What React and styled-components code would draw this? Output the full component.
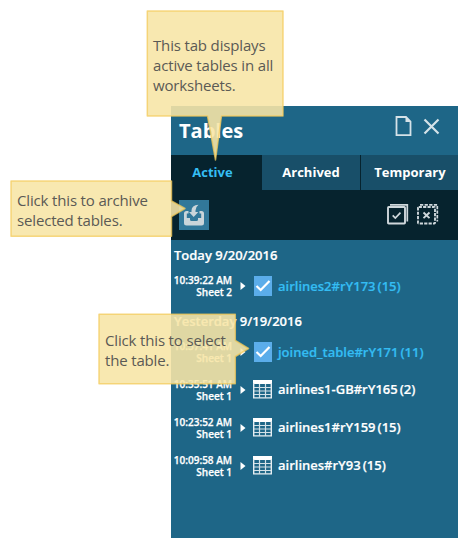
import React from "react";
import styled, { createGlobalStyle } from "styled-components";

const Global = createGlobalStyle`
  * { box-sizing: border-box; }
  body { margin: 0; background: #fff; font-family: "Open Sans", "Noto Sans", sans-serif; overflow: hidden; }
`;

const Page = styled.main`
  position: relative;
  width: 458px;
  height: 538px;
  padding: 106px 0 0 171px;
`;

const Panel = styled.section`
  height: 432px;
  background: #1e6687;
  color: #fff;
  display: flex;
  flex-direction: column;
`;

const Header = styled.header`
  height: 49px;
  padding: 0 18px 0 8px;
  display: flex;
  align-items: flex-start;
  justify-content: space-between;
`;

const Title = styled.h1`
  margin: 0;
  padding-top: 10px;
  font-size: 20px;
  line-height: 30px;
  font-weight: 700;
  color: #fff;
`;

const HeaderActions = styled.div`
  display: flex;
  gap: 11px;
  padding-top: 9px;
`;

const Tabs = styled.nav`
  height: 35px;
  display: grid;
  grid-template-columns: 91px 99px 97px;
  background: #06232e;
`;

const Tab = styled.button`
  border: 0;
  margin: 0;
  padding: 0 ${(p) => p.$padRight || 0}px 0 ${(p) => p.$padLeft || 0}px;
  font: 700 13px/35px "Open Sans", sans-serif;
  text-align: center;
  white-space: nowrap;
  color: ${(p) => (p.$active ? "#34bdf3" : "#fff")};
  background: ${(p) => (p.$active ? "#06232e" : "#184f69")};
  border-right: ${(p) => (p.$divided ? "1px solid #06232e" : "0")};
`;

const Toolbar = styled.div`
  height: 50px;
  padding: 10px 19px 0 8px;
  display: flex;
  justify-content: space-between;
  background: #06232e;
`;

const ArchiveButton = styled.button`
  width: 30px;
  height: 30px;
  border: 0;
  padding: 0;
  background: #32789a;
  display: grid;
  place-items: center;
`;

const SelectActions = styled.div`
  display: flex;
  gap: 8px;
  padding-top: 3px;
`;

const List = styled.div`
  margin-top: -1px;
`;

const DateHeading = styled.h2`
  margin: 0;
  height: 28px;
  padding: 3px 0 0 3px;
  font-size: 13px;
  line-height: 26px;
  font-weight: 600;
  -webkit-text-stroke: 0.2px currentColor;
`;

const Row = styled.div`
  height: 38px;
  display: grid;
  grid-template-columns: 61px 22px 24px 1fr;
  align-items: center;
`;

const Stamp = styled.div`
  font-size: 10px;
  line-height: 12px;
  font-weight: 600;
  text-align: right;
  white-space: nowrap;
  -webkit-text-stroke: 0.25px currentColor;
`;

const Arrow = styled.svg`
  margin-left: 8px;
  display: block;
`;

const Name = styled.div`
  display: flex;
  gap: 2px;
  padding-bottom: ${(p) => (p.$selected ? 0 : 2)}px;
  font-size: 13px;
  line-height: 20px;
  font-weight: 600;
  white-space: nowrap;
  color: ${(p) => (p.$selected ? "#34bdf3" : "#fff")};
  -webkit-text-stroke: 0.2px currentColor;
`;

const CheckBox = styled.span`
  width: 18px;
  height: 20px;
  background: #5badea;
  display: grid;
  place-items: center;
`;

const Grid = styled.svg`
  display: block;
  margin: 0 0 2px -1px;
`;

const Callout = styled.aside`
  position: absolute;
  left: ${(p) => p.$x}px;
  top: ${(p) => p.$y}px;
  width: ${(p) => p.$w}px;
  height: ${(p) => p.$h}px;
`;

const CalloutShape = styled.svg`
  position: absolute;
  inset: 0;
  overflow: visible;
`;

const CalloutText = styled.p`
  position: relative;
  margin: 0;
  padding: ${(p) => p.$top}px 0 0 6px;
  font-size: 15px;
  line-height: 20px;
  letter-spacing: -0.16px;
  color: #5b5a55;
  white-space: pre;
`;

const PageIcon = () => (
  <svg width="17" height="22" viewBox="0 0 17 22" fill="none" stroke="#d5e2e8" strokeWidth="1.8">
    <path d="M1.5 2H11L15.500 6.500V20.200H1.500Z" />
    <path d="M10.500 1.500V7H16Z" fill="#d5e2e8" stroke="none" />
  </svg>
);

const CloseIcon = () => (
  <svg width="17" height="22" viewBox="0 0 17 22" fill="none" stroke="#d5e2e8" strokeWidth="2.200">
    <path d="M1.500 4.500L15.500 18.500M15.500 4.500L1.500 18.500" />
  </svg>
);

const ArchiveIcon = () => (
  <svg width="22" height="22" viewBox="0 0 22 22" fill="#cbd5da">
    <path d="M5.500 7H3.500Q1 7 1 9.500V19Q1 21.500 3.500 21.500H18.500Q21 21.500 21 19V9.500Q21 7 18.500 7H16.500V9.500H18.200V14H15V15.500Q15 17 13.500 17H8.500Q7 17 7 15.500V14H3.800V9.500H5.500Z" />
    <path d="M15.500 .8Q8.500 1.500 8.500 6.500V8H6L10.700 13L15.300 8H12.500V6.500Q12.500 3 15.500 .8Z" />
  </svg>
);

const SelectAllIcon = () => (
  <svg width="22" height="22" viewBox="0 0 22 22" fill="none" stroke="#cfd8dc">
    <path d="M3 1.800H20.300V18.500" strokeWidth="1.700" />
    <rect x="1" y="4" width="17" height="16.500" rx=".7" strokeWidth="1.900" />
    <path d="M5.700 12.300L8.300 15L13.500 9.700" strokeWidth="1.700" />
  </svg>
);

const ClearAllIcon = () => (
  <svg width="22" height="22" viewBox="0 0 22 22" fill="none" stroke="#cfd8dc">
    <path d="M3 1.800H20.300V18.500" strokeWidth="1.700" strokeDasharray="3.300 1.300" />
    <rect x="1" y="4" width="17" height="16.500" rx=".7" strokeWidth="1.900" strokeDasharray="3.200 1.200" />
    <path d="M6.500 9.500L12.500 15.100M12.500 9.500L6.500 15.100" strokeWidth="1.900" />
  </svg>
);

const TableIcon = () => (
  <Grid width="20" height="20" viewBox="0 0 20 20" fill="none">
    <rect x="0" y="1" width="19" height="4" fill="#fff" />
    <path d="M.7 4V18.900H18.300V4" stroke="#e5eef2" strokeWidth="1.400" />
    <path d="M1 8.500H18M1 12H18M1 15.500H18M6.500 5V19M12.500 5V19" stroke="#d3e1e7" strokeWidth="1.200" />
  </Grid>
);

const sections = [
  {
    date: "Today 9/20/2016",
    rows: [{ time: "10:39:22 AM", sheet: "Sheet 2", name: "airlines2#rY173", count: 15, selected: true }],
  },
  {
    date: "Yesterday 9/19/2016",
    rows: [
      { time: "10:37:41 AM", sheet: "Sheet 1", name: "joined_table#rY171", count: 11, selected: true },
      { time: "10:35:51 AM", sheet: "Sheet 1", name: "airlines1-GB#rY165", count: 2 },
      { time: "10:23:52 AM", sheet: "Sheet 1", name: "airlines1#rY159", count: 15 },
      { time: "10:09:58 AM", sheet: "Sheet 1", name: "airlines#rY93", count: 15 },
    ],
  },
];

const TableRow = ({ row }) => (
  <Row>
    <Stamp>
      {row.time}
      <br />
      {row.sheet}
    </Stamp>
    <Arrow width="6" height="8" viewBox="0 0 6 8" fill="#fff">
      <path d="M.5 0L5.500 4L.5 8Z" />
    </Arrow>
    {row.selected ? (
      <CheckBox>
        <svg width="16" height="14" viewBox="0 0 16 14" fill="none" stroke="#fff" strokeWidth="2.200">
          <path d="M1.500 7L5.700 11L14.500 2" />
        </svg>
      </CheckBox>
    ) : (
      <TableIcon />
    )}
    <Name $selected={row.selected}>
      <span>{row.name}</span>
      <span>({row.count})</span>
    </Name>
  </Row>
);

const Note = ({ x, y, w, h, outline, top, children }) => (
  <Callout $x={x} $y={y} $w={w} $h={h}>
    <CalloutShape width={w} height={h}>
      <path d={outline} fill="rgba(247,229,166,.89)" stroke="#f3cb5c" strokeOpacity=".75" strokeWidth="1.500" strokeLinejoin="round" />
    </CalloutShape>
    <CalloutText $top={top}>{children}</CalloutText>
  </Callout>
);

export default function App() {
  return (
    <Page>
      <Global />
      <Panel>
        <Header>
          <Title>Tables</Title>
          <HeaderActions>
            <PageIcon />
            <CloseIcon />
          </HeaderActions>
        </Header>
        <Tabs>
          <Tab $active $padRight={8}>Active</Tab>
          <Tab $divided>Archived</Tab>
          <Tab $padLeft={1}>Temporary</Tab>
        </Tabs>
        <Toolbar>
          <ArchiveButton><ArchiveIcon /></ArchiveButton>
          <SelectActions>
            <SelectAllIcon />
            <ClearAllIcon />
          </SelectActions>
        </Toolbar>
        <List>
          {sections.map((s) => (
            <React.Fragment key={s.date}>
              <DateHeading>{s.date}</DateHeading>
              {s.rows.map((r) => <TableRow key={r.time} row={r} />)}
            </React.Fragment>
          ))}
        </List>
      </Panel>
      <Note x={147} y={11} w={136} h={105} top={24}
        outline="M.3 0H136V105H74.500L68.500 149L60.500 105H.3Z">
        {"This tab displays\nactive tables in all\nworksheets."}
      </Note>
      <Note x={11} y={181} w={160} h={55} top={9}
        outline="M0 0H160.500V20L174 27.500L160.500 35.500V55.300H0Z">
        {"Click this to archive\nselected tables."}
      </Note>
      <Note x={99} y={314} w={136} h={70} top={16}
        outline="M0 .3H136.300V26.500L149.500 34.500L136.300 42.500V69.700H0Z">
        {"Click this to select\nthe table."}
      </Note>
    </Page>
  );
}
